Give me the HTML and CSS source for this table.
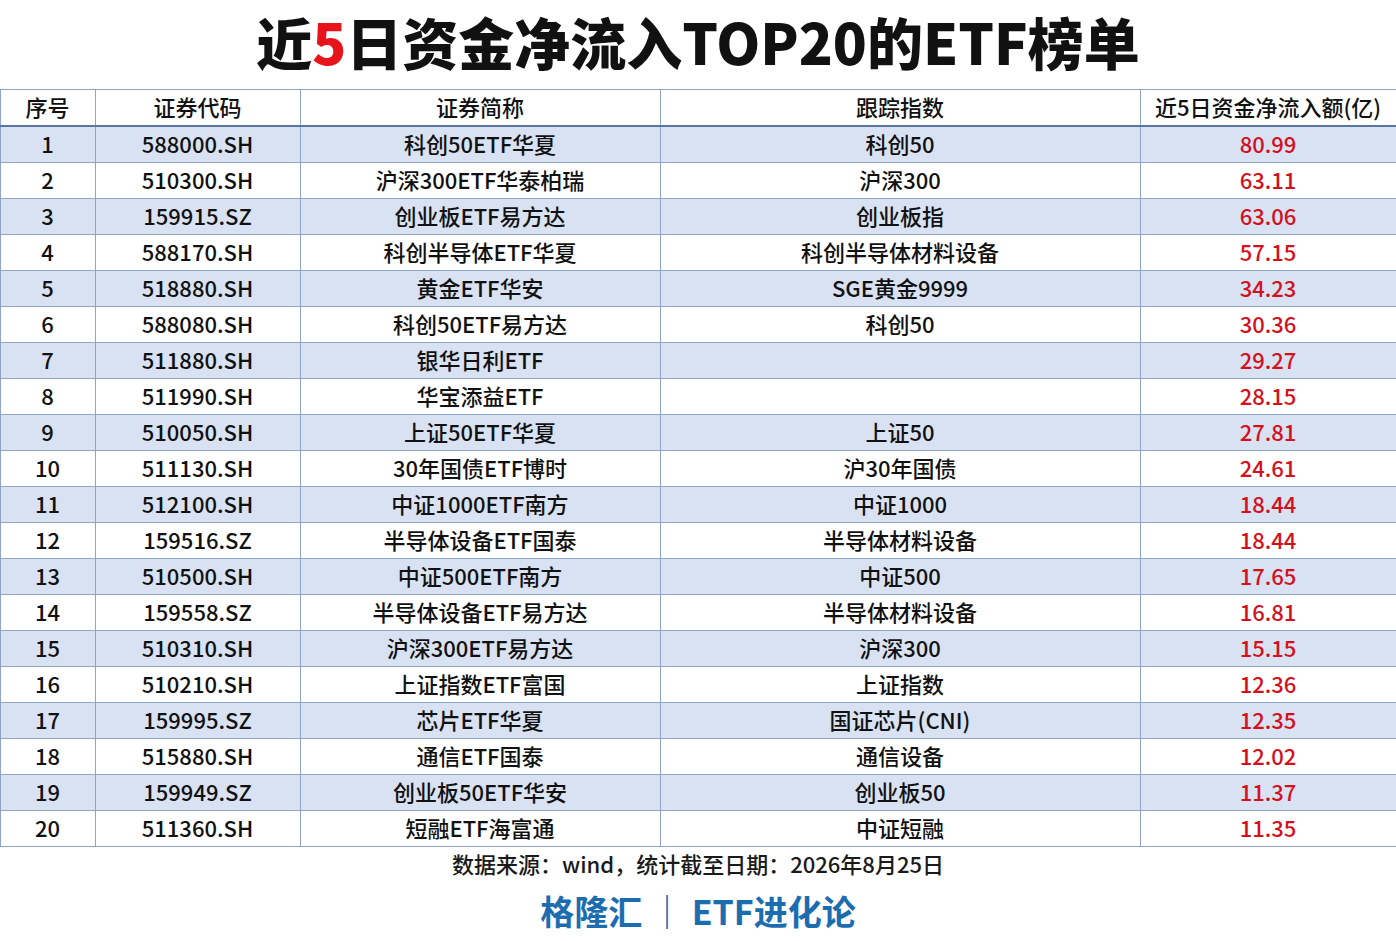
FILE: index.html
```html
<!DOCTYPE html>
<html lang="zh-CN">
<head>
<meta charset="utf-8">
<title>近5日资金净流入TOP20的ETF榜单</title>
<link rel="stylesheet" href="styles.css">
</head>
<body>
<div class="page">
  <h1 class="title">近<span class="hl">5</span>日资金净流入TOP20的ETF榜单</h1>
  <table class="grid">
    <colgroup>
      <col class="c1"><col class="c2"><col class="c3"><col class="c4"><col class="c5">
    </colgroup>
    <thead>
      <tr><th>序号</th><th>证券代码</th><th>证券简称</th><th>跟踪指数</th><th>近5日资金净流入额(亿)</th></tr>
    </thead>
    <tbody>
      <tr><td>1</td><td>588000.SH</td><td>科创50ETF华夏</td><td>科创50</td><td class="num">80.99</td></tr>
      <tr><td>2</td><td>510300.SH</td><td>沪深300ETF华泰柏瑞</td><td>沪深300</td><td class="num">63.11</td></tr>
      <tr><td>3</td><td>159915.SZ</td><td>创业板ETF易方达</td><td>创业板指</td><td class="num">63.06</td></tr>
      <tr><td>4</td><td>588170.SH</td><td>科创半导体ETF华夏</td><td>科创半导体材料设备</td><td class="num">57.15</td></tr>
      <tr><td>5</td><td>518880.SH</td><td>黄金ETF华安</td><td>SGE黄金9999</td><td class="num">34.23</td></tr>
      <tr><td>6</td><td>588080.SH</td><td>科创50ETF易方达</td><td>科创50</td><td class="num">30.36</td></tr>
      <tr><td>7</td><td>511880.SH</td><td>银华日利ETF</td><td></td><td class="num">29.27</td></tr>
      <tr><td>8</td><td>511990.SH</td><td>华宝添益ETF</td><td></td><td class="num">28.15</td></tr>
      <tr><td>9</td><td>510050.SH</td><td>上证50ETF华夏</td><td>上证50</td><td class="num">27.81</td></tr>
      <tr><td>10</td><td>511130.SH</td><td>30年国债ETF博时</td><td>沪30年国债</td><td class="num">24.61</td></tr>
      <tr><td>11</td><td>512100.SH</td><td>中证1000ETF南方</td><td>中证1000</td><td class="num">18.44</td></tr>
      <tr><td>12</td><td>159516.SZ</td><td>半导体设备ETF国泰</td><td>半导体材料设备</td><td class="num">18.44</td></tr>
      <tr><td>13</td><td>510500.SH</td><td>中证500ETF南方</td><td>中证500</td><td class="num">17.65</td></tr>
      <tr><td>14</td><td>159558.SZ</td><td>半导体设备ETF易方达</td><td>半导体材料设备</td><td class="num">16.81</td></tr>
      <tr><td>15</td><td>510310.SH</td><td>沪深300ETF易方达</td><td>沪深300</td><td class="num">15.15</td></tr>
      <tr><td>16</td><td>510210.SH</td><td>上证指数ETF富国</td><td>上证指数</td><td class="num">12.36</td></tr>
      <tr><td>17</td><td>159995.SZ</td><td>芯片ETF华夏</td><td>国证芯片(CNI)</td><td class="num">12.35</td></tr>
      <tr><td>18</td><td>515880.SH</td><td>通信ETF国泰</td><td>通信设备</td><td class="num">12.02</td></tr>
      <tr><td>19</td><td>159949.SZ</td><td>创业板50ETF华安</td><td>创业板50</td><td class="num">11.37</td></tr>
      <tr><td>20</td><td>511360.SH</td><td>短融ETF海富通</td><td>中证短融</td><td class="num">11.35</td></tr>
    </tbody>
  </table>
  <p class="source">数据来源：wind，统计截至日期：2026年8月25日</p>
  <p class="brand">格隆汇 ｜ ETF进化论</p>
</div>
</body>
</html>
```

FILE: styles.css
```css
html, body {
  margin: 0;
  padding: 0;
  background: #ffffff;
}
body {
  font-family: "Noto Sans CJK SC", "Noto Sans", sans-serif;
  color: #111111;
}
.page {
  width: 1396px;
  display: flex;
  flex-direction: column;
  align-items: center;
}
.title {
  margin: 0;
  height: 89px;
  line-height: 82px;
  font-size: 56px;
  font-weight: 900;
  color: #111111;
  text-align: center;
}
.title .hl {
  color: #e8141b;
}
.grid {
  width: 1396px;
  border-collapse: collapse;
  table-layout: fixed;
}
.c1 { width: 95px; }
.c2 { width: 205px; }
.c3 { width: 360px; }
.c4 { width: 480px; }
.c5 { width: 256px; }
.grid th, .grid td {
  height: 35px;
  padding: 0 0 2px;
  box-sizing: border-box;
  border: 1px solid #8fa4c8;
  text-align: center;
  vertical-align: middle;
  font-size: 22px;
  font-weight: 500;
  line-height: 33px;
  white-space: nowrap;
  overflow: hidden;
}
.grid th {
  border-bottom: 2px solid #58779f;
  background: #ffffff;
}
.grid tbody tr:nth-child(odd) td {
  background: #d9e2f3;
}
.grid td.num {
  color: #d4101c;
}
.source {
  margin: 2px 0 0;
  font-size: 22px;
  font-weight: 500;
  line-height: 28px;
  color: #1a1a1a;
}
.brand {
  margin: 12px 0 0;
  font-size: 34px;
  font-weight: 700;
  line-height: 44px;
  color: #1c6db0;
}
```
